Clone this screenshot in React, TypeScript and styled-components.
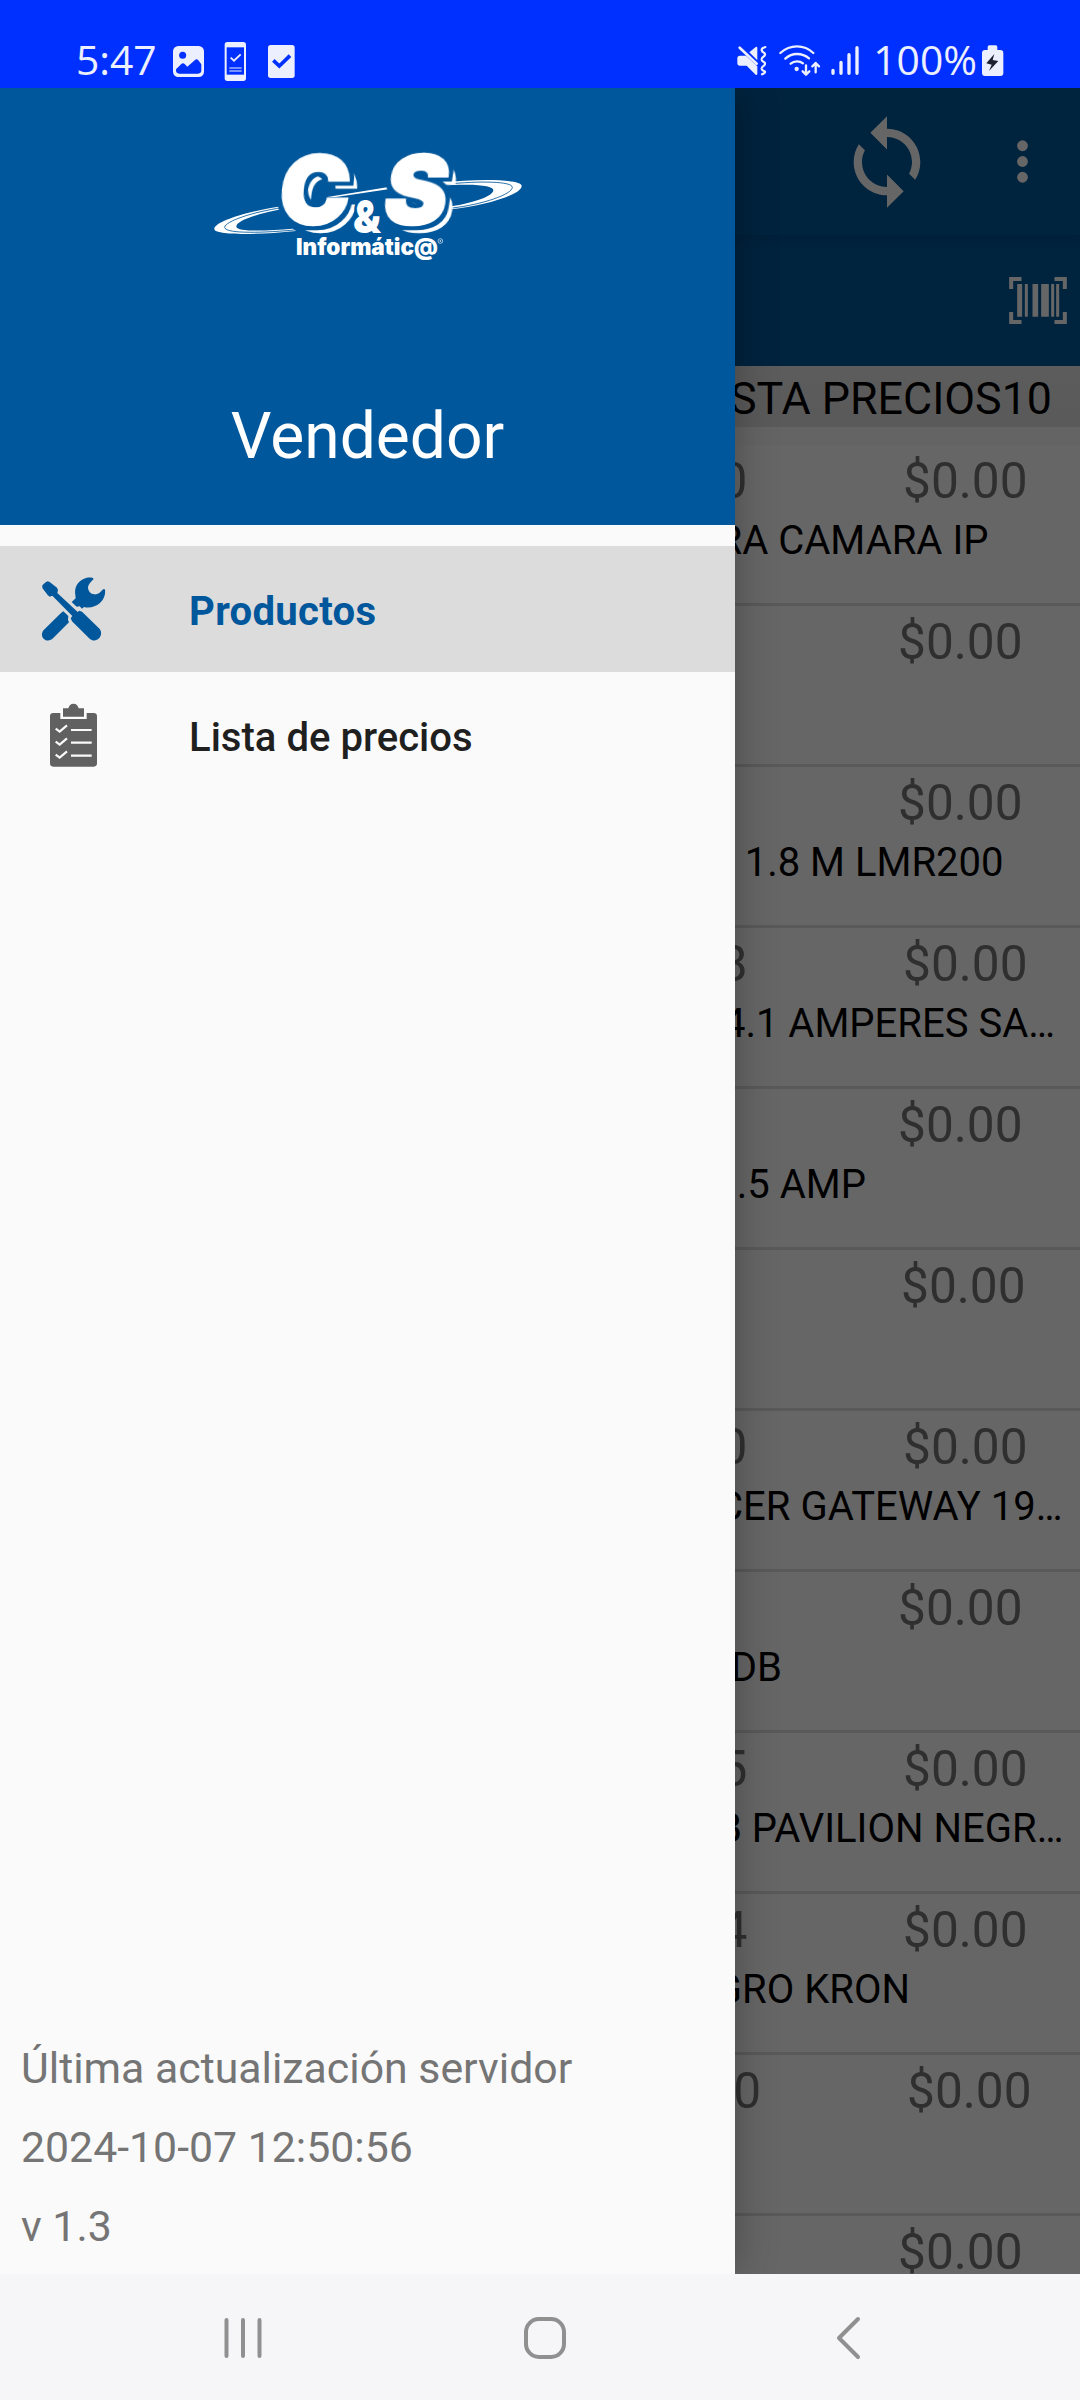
import React from 'react';
import styled, { createGlobalStyle } from 'styled-components';

const GlobalStyle = createGlobalStyle`
  html, body { margin: 0; padding: 0; }
  body { font-family: Roboto, "Liberation Sans", sans-serif; background: #fff; }
  *, *::before, *::after { box-sizing: border-box; }
  svg { display: block; flex: none; overflow: visible; }
`;

const BRAND = '#01579b';
const STATUS = '#0030ff';
const STATUS_INK = '#eceffd';

const Screen = styled.div`
  width: 1080px;
  height: 2400px;
  display: flex;
  flex-direction: column;
  overflow: hidden;
`;

/* ---------- status bar ---------- */

const StatusBar = styled.header`
  flex: none;
  height: 88px;
  padding: 38px 75px 0 76px;
  display: flex;
  justify-content: space-between;
  align-items: flex-start;
  background: ${STATUS};
  color: ${STATUS_INK};
  font: 400 40.8px/43px "Open Sans", "Noto Sans", sans-serif;
`;

const StatusGroup = styled.div<{ $gap: number }>`
  display: flex;
  gap: ${(p) => p.$gap}px;
`;

const Clock = styled.span`
  width: 77px;
  white-space: nowrap;
`;

const BatteryLevel = styled.span`
  margin: 0 -4px 0 5px;
  white-space: nowrap;
`;

/* ---------- app content ---------- */

const Body = styled.main`
  position: relative;
  flex: 1;
  overflow: hidden;
  background: #fff;
`;

const Page = styled.div`
  height: 100%;
  display: flex;
  flex-direction: column;
`;

const Toolbar = styled.div`
  position: relative;
  z-index: 1;
  flex: none;
  height: 147px;
  padding-right: 26px;
  display: flex;
  justify-content: flex-end;
  align-items: center;
  gap: 54px;
  background: ${BRAND};
  color: #fff;
  box-shadow: 0 3px 10px rgba(0, 0, 0, 0.12);
`;

const SearchBar = styled.div`
  flex: none;
  height: 131px;
  padding: 0 13px 0 0;
  display: flex;
  justify-content: flex-end;
  align-items: center;
  background: ${BRAND};
  color: #fff;
`;

const ListHeader = styled.div`
  flex: none;
  height: 61px;
  padding: 9px 28px 0 0;
  background: linear-gradient(#e6e6e6, #e0e0e0);
  color: #000;
  font-size: 44.75px;
  line-height: 48px;
  text-align: right;
  white-space: nowrap;
`;

const List = styled.div`
  flex: 1;
  min-height: 0;
  overflow: hidden;
  padding-top: 18px;
  background: linear-gradient(#fafafa 18px, #fff 18px);
`;

const Row = styled.div`
  height: 161px;
  padding-top: 6px;
  border-bottom: 3px solid #dfdfdf;
`;

const RowTop = styled.div<{ $right: number; $gap: number }>`
  height: 60px;
  padding-right: ${(p) => p.$right}px;
  display: flex;
  justify-content: flex-end;
  gap: ${(p) => p.$gap}px;
  color: #757575;
  font-size: 49.6px;
  line-height: 60px;
`;

const RowName = styled.div<{ $right: number }>`
  margin-top: 5px;
  padding-right: ${(p) => p.$right}px;
  color: #000;
  font-size: 40px;
  line-height: 50px;
  text-align: right;
  white-space: nowrap;
`;

const Scrim = styled.div`
  position: absolute;
  inset: 0;
  z-index: 2;
  background: rgba(0, 0, 0, 0.6);
`;

/* ---------- drawer ---------- */

const Drawer = styled.aside`
  position: absolute;
  inset: 0 auto 0 0;
  z-index: 3;
  width: 735px;
  display: flex;
  flex-direction: column;
  background: #fafafa;
  box-shadow: 0 0 40px rgba(0, 0, 0, 0.28);
`;

const DrawerHeader = styled.div`
  flex: none;
  height: 437px;
  padding-top: 52px;
  display: flex;
  flex-direction: column;
  align-items: center;
  background: ${BRAND};
  color: #fff;
`;

const LogoBox = styled.div`
  width: 340px;
  height: 130px;
  margin-left: 5px;
`;

const DrawerTitle = styled.h1`
  margin: 129px 0 0;
  font-size: 64.1px;
  font-weight: 400;
  line-height: 76px;
`;

const Menu = styled.nav`
  flex: 1;
  padding-top: 21px;
`;

const MenuItem = styled.div<{ $active?: boolean }>`
  height: 126px;
  padding-left: 42px;
  display: flex;
  align-items: center;
  gap: 84px;
  background: ${(p) => (p.$active ? '#dcdcdc' : 'transparent')};
  color: ${(p) => (p.$active ? BRAND : '#1f1f1f')};
  font-size: 40.1px;
  font-weight: ${(p) => (p.$active ? 700 : 500)};
  letter-spacing: ${(p) => (p.$active ? '0.3px' : '0')};
`;

const MenuLabel = styled.span`
  padding-top: 4px;
`;

const DrawerFooter = styled.div`
  padding: 0 0 8px 21px;
  color: #757575;
  font-size: 42.8px;
  line-height: 79px;
`;

/* ---------- navigation bar ---------- */

const NavBar = styled.footer`
  flex: none;
  height: 126px;
  padding: 2px 203px 0 213px;
  display: flex;
  justify-content: space-between;
  align-items: center;
  background: #f6f6f8;
`;

/* ---------- drawings ---------- */

const ImageIcon = () => (
  <svg width="33" height="44" viewBox="336 54 99 132">
    <rect x="339" y="78" width="93" height="93" rx="16" fill={STATUS_INK} />
    <circle cx="368" cy="106" r="10.5" fill={STATUS} />
    <path
      d="M348 148L364 132Q369 127 374 132L382 140L405 120Q410 115 415 121L424 133V151Q424 161 414 161H358Q348 161 348 151Z"
      fill={STATUS}
    />
  </svg>
);

const PhoneIcon = () => (
  <svg width="24" height="44" viewBox="492 54 72 132" fill="none">
    <rect x="494" y="66" width="64" height="117" rx="8" fill={STATUS_INK} />
    <rect x="500" y="82" width="52" height="82" fill={STATUS} />
    <path d="M512 113L522 122L542 103" stroke={STATUS_INK} strokeWidth="5.5" />
    <path d="M508 144H545M508 153H545" stroke={STATUS_INK} strokeWidth="3.5" />
  </svg>
);

const CheckIcon = () => (
  <svg width="29" height="44" viewBox="624 54 87 132" fill="none">
    <rect x="627" y="75" width="80" height="99" rx="8" fill={STATUS_INK} />
    <path d="M643 121L661 138L693 107" stroke={STATUS} strokeWidth="11" />
  </svg>
);

const MuteIcon = () => (
  <svg width="34" height="44" viewBox="48 54 102 132" fill={STATUS_INK}>
    <path d="M60 107H78L112 139V162Q111 166 107 164L80 137H60Q52 137 52 129V115Q52 107 60 107Z" />
    <path d="M88 97L107 81Q112 78 112 84V121Z" />
    <path d="M59 83L110 131" stroke={STATUS_INK} strokeWidth="8" strokeLinecap="round" />
    <path
      d="M136 81Q124 85 125 91Q126 96 133 99Q137 103 133 108Q124 113 125 119Q126 124 133 127Q137 131 133 136Q124 141 125 147Q126 152 134 154Q138 158 126 163"
      fill="none"
      stroke={STATUS_INK}
      strokeWidth="6.5"
      strokeLinecap="round"
    />
  </svg>
);

const WifiIcon = () => (
  <svg
    width="44"
    height="44"
    viewBox="177 54 132 132"
    fill="none"
    stroke={STATUS_INK}
    strokeWidth="7"
    strokeLinecap="round"
    strokeLinejoin="round"
  >
    <path d="M184 99Q206 79 234 79Q262 79 283 99" />
    <path d="M199 116Q214 102 234 102Q254 102 270 115" />
    <path d="M215 131Q223 124 234 124Q245 124 252 130" />
    <circle cx="233" cy="147" r="3" />
    <path d="M261 136V163M251 154L261 164L271 154" />
    <path d="M290 157V129M280 139L290 129L300 139" />
  </svg>
);

const SignalIcon = () => (
  <svg width="30" height="44" viewBox="330 54 90 132" fill="none" stroke={STATUS_INK} strokeWidth="10" strokeLinecap="round">
    <path d="M339 151V160M363 127V160M387 104V160M411 83V160" />
  </svg>
);

const BatteryIcon = () => (
  <svg width="24" height="44" viewBox="783 54 72 132" fill={STATUS_INK}>
    <rect x="786" y="90" width="64" height="78" rx="9" />
    <rect x="803" y="76" width="29" height="22" rx="5" />
    <path d="M823 102L799 130L815 134L807 153L835 123L818 120Z" fill="#1d2030" />
  </svg>
);

const SyncIcon = () => (
  <svg width="100" height="100" viewBox="0 0 24 24" fill="currentColor">
    <path d="M12 4V1L8 5l4 4V6c3.31 0 6 2.69 6 6 0 1.01-.25 1.97-.7 2.8l1.46 1.46C19.54 15.03 20 13.57 20 12c0-4.42-3.58-8-8-8zm0 14c-3.31 0-6-2.69-6-6 0-1.01.25-1.97.7-2.8L5.24 7.74C4.46 8.97 4 10.43 4 12c0 4.42 3.58 8 8 8v3l4-4-4-4v3z" />
  </svg>
);

const MoreIcon = () => (
  <svg width="63" height="63" viewBox="0 0 24 24" fill="currentColor">
    <circle cx="12" cy="6" r="2.05" />
    <circle cx="12" cy="12" r="2.05" />
    <circle cx="12" cy="18" r="2.05" />
  </svg>
);

const BarcodeIcon = () => (
  <svg width="58" height="47" viewBox="867 591 173 141" fill="currentColor">
    <path
      d="M873 627V597H904M1003 597H1034V627M1034 696V726H1003M904 726H873V696"
      fill="none"
      stroke="currentColor"
      strokeWidth="12"
    />
    <path d="M891 612H906V710H891ZM914 612H923V710H914ZM937 612H954V710H937ZM963 612H986V710H963ZM993 612H1002V710H993ZM1008 612H1017V710H1008Z" />
  </svg>
);

const ToolsIcon = () => (
  <svg width="63" height="63" viewBox="126 592 189 189" fill="currentColor">
    <path d="M281 595C278 589 262 590 252 594C232 602 222 622 226 643L227 653L215 664L230 678L239 677L246 684L252 679C268 683 287 679 299 668C312 656 317 641 315 627C313 624 310 625 307 628C300 637 292 642 283 641C272 641 264 631 264 620C265 610 273 603 281 595Z" />
    <path d="M190 692L205 706L204 718L207 725L159 773C151 781 139 782 131 774C124 767 124 755 132 747L183 697Z" />
    <path d="M143 602L149 604L171 621L174 628L172 637L233 694L238 690L246 693L297 743C305 751 306 763 298 772C290 781 278 782 269 774L216 722L212 713L217 706L157 645L149 648L143 643L127 622L127 614L137 605Z" />
  </svg>
);

const ClipboardIcon = () => (
  <svg width="63" height="63" viewBox="126 970 189 189" fill="none">
    <path
      d="M160 997H181V1015H260V997H281Q291 997 291 1007V1148Q291 1158 281 1158H160Q150 1158 150 1148V1007Q150 997 160 997Z"
      fill="#616161"
    />
    <path d="M189 983H205Q208 969 220.5 969Q233 969 236 983H252V1008H189Z" fill="#616161" />
    <path
      d="M167 1044L179 1053L201 1034M167 1083L179 1092L201 1073M167 1122L179 1131L201 1112M213 1048H275M213 1086H275M213 1125H275"
      stroke="#fafafa"
      strokeWidth="6.5"
    />
  </svg>
);

const LogoGlyph = styled.text`
  font-family: Inter, Roboto, sans-serif;
  font-weight: 900;
`;

/* Planet-style mark: rings behind, extruded initials in front. */
const Logo = () => (
  <svg width="340" height="130" viewBox="0 0 1020 390" fill="#fff" role="img">
    <defs>
      <filter id="extrude" x="-20%" y="-20%" width="150%" height="150%" colorInterpolationFilters="sRGB">
        <feOffset in="SourceGraphic" dx="25" dy="22" result="back" />
        <feMorphology in="SourceAlpha" operator="dilate" radius="11" result="grown" />
        <feFlood floodColor={BRAND} />
        <feComposite in2="grown" operator="in" result="halo" />
        <feMerge>
          <feMergeNode in="back" />
          <feMergeNode in="halo" />
          <feMergeNode in="SourceGraphic" />
        </feMerge>
      </filter>
    </defs>
    <path d="M247 199C150 212 43 244 43 267C43 284 150 287 288 273L278 266C200 273 112 276 109 260C108 244 165 222 250 207Z" />
    <path d="M245 203C160 216 76 243 74 262C75 279 160 281 284 270" fill="none" stroke={BRAND} strokeWidth="2.5" />
    <path d="M725 128C830 116 965 117 965 138C965 165 850 197 755 208V199C830 187 880 167 880 151C880 134 800 132 725 137Z" />
    <path d="M735 133C840 122 937 124 937 142C936 163 850 193 757 204" fill="none" stroke={BRAND} strokeWidth="2.5" />
    <g fontSize="284" stroke="#fff" strokeWidth="8">
      <LogoGlyph transform="translate(231 252) skewX(-5)" filter="url(#extrude)">C</LogoGlyph>
      <path d="M378 172L570 140L590 144L408 171Z" stroke="none" />
      <LogoGlyph transform="translate(541 252) skewX(-9)" filter="url(#extrude)">S</LogoGlyph>
    </g>
    <LogoGlyph transform="translate(459 279) scale(0.87 1)" fontSize="138" stroke={BRAND} strokeWidth="18" paintOrder="stroke">
      &amp;
    </LogoGlyph>
    <LogoGlyph x="288" y="345" fontSize="67.5">Informátic@</LogoGlyph>
    <circle cx="721" cy="303" r="7" fill="none" stroke="#fff" strokeWidth="1.8" />
    <circle cx="721" cy="303" r="2.5" />
  </svg>
);

const RecentsIcon = () => (
  <svg width="60" height="60" viewBox="0 0 60 60" stroke="#909090" strokeWidth="4" strokeLinecap="round">
    <path d="M13.5 12V48M30 12V48M46.5 12V48" />
  </svg>
);

const HomeIcon = () => (
  <svg width="60" height="60" viewBox="0 0 60 60" fill="none" stroke="#909090" strokeWidth="4">
    <rect x="11" y="11" width="38" height="38" rx="13" />
  </svg>
);

const BackIcon = () => (
  <svg width="60" height="60" viewBox="0 0 60 60" fill="none" stroke="#909090" strokeWidth="4" strokeLinecap="round" strokeLinejoin="round">
    <path d="M41 11L22 30L41 49" />
  </svg>
);

/* ---------- data ---------- */

type Product = { code?: string; codeGap?: number; priceInset: number; name?: string; nameInset?: number };

const products: Product[] = [
  { code: '0', priceInset: 52.4, name: 'RA CAMARA IP', nameInset: 91.5 },
  { priceInset: 57.4 },
  { priceInset: 57.4, name: '1.8 M LMR200', nameInset: 76.5 },
  { code: '8', priceInset: 52.4, name: '4.1 AMPERES SA…', nameInset: 25 },
  { priceInset: 57.4, name: '0.5 AMP', nameInset: 214 },
  { priceInset: 54.4 },
  { code: '0', priceInset: 52.4, name: 'CER GATEWAY 19…', nameInset: 17.6 },
  { priceInset: 57.4, name: 'DB', nameInset: 298.2 },
  { code: '5', priceInset: 52.4, name: 'B PAVILION NEGR…', nameInset: 16.6 },
  { code: '4', priceInset: 52.4, name: 'GRO KRON', nameInset: 170 },
  { code: '0', codeGap: 146, priceInset: 48.4 },
  { priceInset: 57.4 },
];

export default function App() {
  return (
    <Screen>
      <GlobalStyle />
      <StatusBar>
        <StatusGroup $gap={19}>
          <Clock>5:47</Clock>
          <ImageIcon />
          <PhoneIcon />
          <CheckIcon />
        </StatusGroup>
        <StatusGroup $gap={8}>
          <MuteIcon />
          <WifiIcon />
          <SignalIcon />
          <BatteryLevel>100%</BatteryLevel>
          <BatteryIcon />
        </StatusGroup>
      </StatusBar>

      <Body>
        <Page>
          <Toolbar>
            <SyncIcon />
            <MoreIcon />
          </Toolbar>
          <SearchBar>
            <BarcodeIcon />
          </SearchBar>
          <ListHeader>STA PRECIOS10</ListHeader>
          <List>
            {products.map((p, i) => (
              <Row key={i}>
                <RowTop $right={p.priceInset} $gap={p.codeGap ?? 155.7}>
                  {p.code && <span>{p.code}</span>}
                  <span>$0.00</span>
                </RowTop>
                {p.name && <RowName $right={p.nameInset ?? 0}>{p.name}</RowName>}
              </Row>
            ))}
          </List>
        </Page>
        <Scrim />
        <Drawer>
          <DrawerHeader>
            <LogoBox>
              <Logo />
            </LogoBox>
            <DrawerTitle>Vendedor</DrawerTitle>
          </DrawerHeader>
          <Menu>
            <MenuItem $active>
              <ToolsIcon />
              <MenuLabel>Productos</MenuLabel>
            </MenuItem>
            <MenuItem>
              <ClipboardIcon />
              <MenuLabel>Lista de precios</MenuLabel>
            </MenuItem>
          </Menu>
          <DrawerFooter>
            <div>Última actualización servidor</div>
            <div>2024-10-07 12:50:56</div>
            <div>v 1.3</div>
          </DrawerFooter>
        </Drawer>
      </Body>

      <NavBar>
        <RecentsIcon />
        <HomeIcon />
        <BackIcon />
      </NavBar>
    </Screen>
  );
}
